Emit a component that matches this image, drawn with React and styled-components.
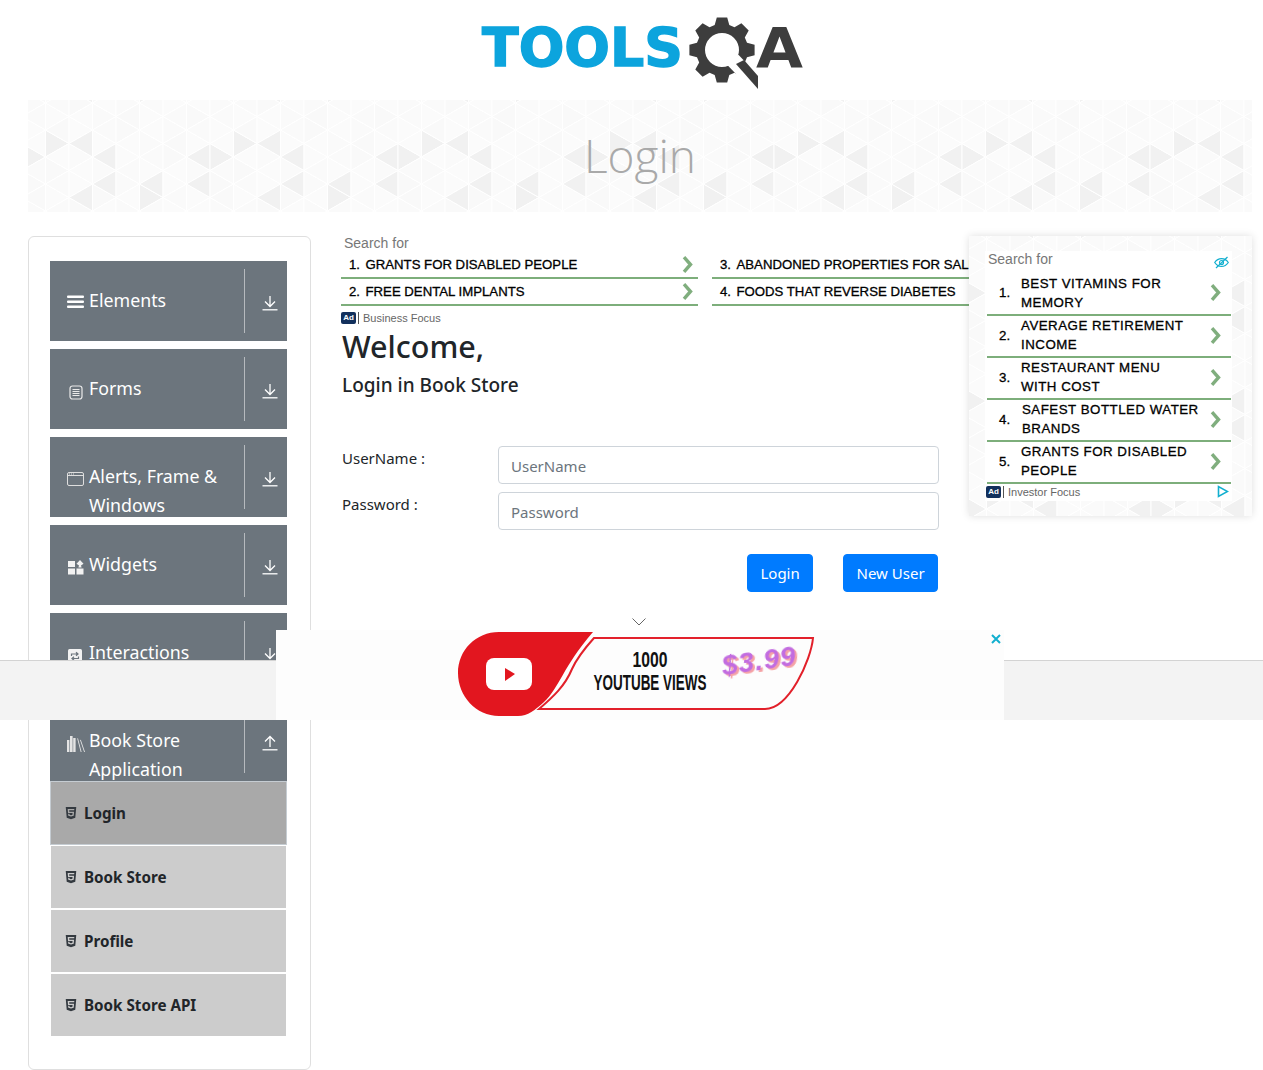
import React from 'react'
import styled, { createGlobalStyle } from 'styled-components'
import { FaHtml5 } from 'react-icons/fa'

const Global = createGlobalStyle`
  html, body { margin: 0; padding: 0; background: #fff; }
  body {
    font-family: "Noto Sans", "Open Sans", sans-serif;
    color: #212529;
    overflow-x: hidden;
  }
  * { box-sizing: border-box; }
`

const Page = styled.div`
  position: relative;
  width: 1263px;
  height: 1070px;
  overflow: hidden;
  padding: 0 11px 0 28px;
`
const Header = styled.header`
  height: 100px;
  display: flex;
  justify-content: center;
`
const Banner = styled.div`
  position: relative;
  height: 112px;
  display: flex;
  align-items: center;
  justify-content: center;
  padding-bottom: 2px;
  overflow: hidden;
`
const Backdrop = styled.svg`
  position: absolute;
  inset: 0;
  width: 100%;
  height: 100%;
`
const Title = styled.h1`
  position: relative;
  margin: 0;
  font-family: "Open Sans", sans-serif;
  font-size: 46px;
  font-weight: 300;
  color: #a9a9a9;
`
const Content = styled.div`
  position: relative;
  display: flex;
  margin-top: 24px;
`

/* sidebar */
const Sidebar = styled.nav`
  flex: 0 0 283px;
  height: 834px;
  border: 1px solid #dfdfdf;
  border-radius: 6px;
  padding: 24px 23px 0 21px;
`
const Group = styled.div`
  display: flex;
  height: 80px;
  overflow: hidden;
  background: #6c757d;
  color: #fff;
  margin-bottom: ${p => (p.$open ? 0 : '8px')};
`
const GroupTitle = styled.div`
  flex: 0 0 194px;
  display: flex;
  padding: 25px 0 0 17px;
  font-size: 17.8px;
  line-height: 29px;
`
const GroupIcon = styled.span`
  flex: 0 0 22px;
  display: flex;
  align-items: flex-start;
  padding-top: 9px;
`
const Expand = styled.div`
  flex: 1;
  margin: 8px 0;
  padding: 4px 0 0 7px;
  border-left: 1px solid #b6babe;
  display: flex;
  align-items: center;
  justify-content: center;
`
const SubItem = styled.div`
  height: 64px;
  display: flex;
  align-items: center;
  gap: 6px;
  padding-left: 13px;
  background: ${p => (p.$active ? '#a9a9a9' : '#cccccc')};
  border: 1px solid ${p => (p.$active ? '#c5ccd2' : '#ffffff')};
  font-size: 15.2px;
  font-weight: 700;
  color: #212529;
  svg { color: #343a40; margin-top: -1px; }
`

/* main column */
const Main = styled.main`
  flex: 1;
  min-width: 0;
  padding-left: 30px;
`
const AdHint = styled.div`
  font-family: "Liberation Sans", Arial, sans-serif;
  font-size: 14px;
  line-height: 15px;
  height: 16px;
  color: #777;
  padding-left: 3px;
`
const AdGrid = styled.div`
  display: grid;
  grid-template-columns: 357px 357px;
  column-gap: 14px;
`
const AdRow = styled.div`
  height: 27px;
  display: flex;
  align-items: center;
  padding: 0 4px 1px 8px;
  border-bottom: 2px solid #7dae7b;
  font-family: "Liberation Sans", Arial, sans-serif;
  font-size: 13.2px;
  color: #000;
  -webkit-text-stroke: 0.3px #000;
  white-space: nowrap;
`
const AdNum = styled.span`
  flex: 0 0 16.5px;
`
const AdText = styled.span`
  flex: 1;
`
const AdFoot = styled.div`
  display: flex;
  align-items: center;
  height: 14px;
  margin-top: 5px;
  font-family: "Liberation Sans", Arial, sans-serif;
  font-size: 11px;
  color: #666;
`
const AdBadge = styled.span`
  display: inline-block;
  width: 15px;
  height: 12px;
  line-height: 12px;
  border-radius: 2px;
  background: #12305c;
  color: #fff;
  font-size: 8px;
  font-weight: 700;
  text-align: center;
  margin-right: 2px;
`
const AdBar = styled.span`
  width: 1px;
  height: 12px;
  background: #555;
  margin-right: 4px;
`
const Welcome = styled.h2`
  margin: 2px 0 0 1px;
  font-size: 30.5px;
  line-height: 38px;
  font-weight: 500;
`
const SubHead = styled.h5`
  margin: 8px 0 0 1px;
  font-size: 19px;
  line-height: 24px;
  font-weight: 500;
`
const LoginForm = styled.form`
  width: 598px;
  margin-top: 49px;
  padding-left: 1px;
`
const FormRow = styled.div`
  display: grid;
  grid-template-columns: 156px 441px;
  margin-bottom: 8px;
`
const FieldLabel = styled.label`
  font-size: 15px;
  line-height: 24px;
`
const Field = styled.input`
  height: 38px;
  padding: 2px 12px 0;
  border: 1px solid #ced4da;
  border-radius: 4px;
  font: inherit;
  font-size: 15px;
  &::placeholder { color: #6c757d; opacity: 1; }
`
const Buttons = styled.div`
  display: flex;
  justify-content: flex-end;
  gap: 30px;
  margin-top: 24px;
  padding-right: 1px;
`
const Btn = styled.button`
  height: 38px;
  padding: 0 12.4px;
  border: 1px solid #007bff;
  border-radius: 4px;
  background: #007bff;
  color: #fff;
  font: inherit;
  font-size: 15px;
`

/* floating side ad */
const SideAd = styled.aside`
  position: absolute;
  top: 0;
  right: 0;
  width: 283px;
  height: 280px;
  padding: 15px 20px 15px 16px;
  overflow: hidden;
  background: #fff;
  box-shadow: 0 0 8px rgba(0, 0, 0, .13);
`
const SideInner = styled.div`
  position: relative;
  height: 250px;
  background: #fff;
  padding: 0 1px 0 2px;
`
const SideHead = styled.div`
  height: 22px;
  display: flex;
  align-items: flex-start;
  justify-content: space-between;
  padding-left: 1px;
  font-family: "Liberation Sans", Arial, sans-serif;
  font-size: 14px;
  line-height: 16px;
  color: #777;
  svg { margin: 5px 2px 0 0; }
`
const SideRow = styled.div`
  height: ${p => (p.$first ? 43 : 42)}px;
  display: flex;
  align-items: center;
  padding: 0 9px 2px 12px;
  border-bottom: 2px solid #7dae7b;
  font-family: "Liberation Sans", Arial, sans-serif;
  font-size: 13.3px;
  color: #000;
  -webkit-text-stroke: 0.3px #000;
`
const SideNum = styled.span`
  flex: 0 0 22px;
`
const SideText = styled.span`
  flex: 1;
  line-height: 19px;
  letter-spacing: .5px;
  white-space: pre-line;
  padding-left: ${p => p.$shift || 0}px;
`
const SideFoot = styled.div`
  display: flex;
  align-items: center;
  height: 15px;
  margin-left: -1px;
  font-family: "Liberation Sans", Arial, sans-serif;
  font-size: 11px;
  color: #666;
  & > svg { margin-left: auto; margin-right: 2px; }
`

/* sticky bottom ad */
const StickyStrip = styled.div`
  position: absolute;
  left: 0;
  right: 0;
  top: 660px;
  height: 60px;
  background: #f3f3f3;
  border-top: 1px solid #d3d3d3;
`
const StickyCreative = styled.div`
  position: absolute;
  left: 276px;
  top: 630px;
  width: 728px;
  height: 90px;
  background: #fdfdfd;
  display: flex;
  align-items: center;
  padding-left: 182px;
`
const StickyFold = styled.svg`
  position: absolute;
  left: 632px;
  top: 618px;
`
const StickyClose = styled.svg`
  position: absolute;
  right: 3px;
  top: 4px;
`
const PriceTag = styled.text`
  font-family: "Liberation Sans", Arial, sans-serif;
  font-style: italic;
  font-weight: 700;
  font-size: 28px;
  letter-spacing: 1px;
  fill: #c26ce0;
  filter: drop-shadow(2px 2px 0 #f5a3a6);
`

const darkCells = new Set(['3L57', '3L84', '7L57', '7R57', '7L84', '5L84', '0R43.5', '2L43.5', '2L97.5', '4R97.5'])
const paleFills = ['#fbfbfb', '#fafafa', '#f9f9f9', '#fbfbfb', '#fafafa']

function trianglesFor() {
  const out = []
  const W = 23.5
  const S = 27
  for (let k = -1; k <= 8; k++) {
    const x = 17.5 + k * W
    const odd = ((k % 2) + 2) % 2 === 1
    const start = odd ? 3 : -10.5
    for (let cy = start; cy <= 125; cy += S) {
      const wrapK = ((k % 8) + 8) % 8
      const wrapY = ((cy % 108) + 108) % 108
      ;['L', 'R'].forEach(dir => {
        const tip = dir === 'L' ? x - W : x + W
        const key = wrapK + dir + wrapY
        const seed = Math.floor(wrapK * 7 + wrapY * 3 + (dir === 'L' ? 5 : 11)) % 5
        const fill = darkCells.has(key) ? '#f1f1f1' : paleFills[seed]
        out.push(
          <polygon
            key={k + key + cy}
            points={`${x},${cy - S / 2} ${x},${cy + S / 2} ${tip},${cy}`}
            fill={fill}
            stroke="#ffffff"
            strokeWidth="1"
          />
        )
      })
    }
  }
  return out
}

const TrianglePattern = ({ id }) => (
  <Backdrop aria-hidden="true">
    <defs>
      <pattern id={id} width="188" height="108" patternUnits="userSpaceOnUse">
        {trianglesFor()}
      </pattern>
    </defs>
    <rect width="100%" height="100%" fill={`url(#${id})`} />
  </Backdrop>
)

function gearPath(cx, cy, outer, root, hole, teeth) {
  const step = (Math.PI * 2) / teeth
  let d = ''
  for (let i = 0; i < teeth; i++) {
    const a = i * step - Math.PI / 2
    const pts = [
      [root, a - step * 0.36],
      [outer, a - step * 0.2],
      [outer, a + step * 0.2],
      [root, a + step * 0.36],
    ]
    pts.forEach(([r, t], j) => {
      const px = (cx + r * Math.cos(t)).toFixed(1)
      const py = (cy + r * Math.sin(t)).toFixed(1)
      d += `${i === 0 && j === 0 ? 'M' : 'L'}${px} ${py} `
    })
  }
  d += `Z M${cx - hole} ${cy} a${hole} ${hole} 0 1 0 ${hole * 2} 0 a${hole} ${hole} 0 1 0 ${-hole * 2} 0 Z`
  return d
}

const Logo = () => (
  <svg width="326" height="100" viewBox="0 0 326 100" role="img" aria-label="Tools QA">
    <text
      x="5"
      y="66"
      textLength="201"
      lengthAdjust="spacingAndGlyphs"
      fontFamily="DejaVu Sans, sans-serif"
      fontWeight="700"
      fontSize="54"
      fill="#0ca4dd"
      stroke="#0ca4dd"
      strokeWidth="1.4"
    >
      TOOLS
    </text>
    <path d={gearPath(245, 50, 33, 26, 17, 8)} fill="#3d3d3d" fillRule="evenodd" />
    <path d="M256 60 L282 87" stroke="#fff" strokeWidth="15" />
    <path d="M259 64 L281 89 L281 76 L267 60 Z" fill="#3d3d3d" />
    <text
      x="279"
      y="67"
      textLength="47"
      lengthAdjust="spacingAndGlyphs"
      fontFamily="DejaVu Sans, sans-serif"
      fontWeight="700"
      fontSize="55"
      fill="#3d3d3d"
    >
      A
    </text>
  </svg>
)

const ArrowIcon = ({ up }) => (
  <svg width="16" height="16" viewBox="0 0 16 16" fill="none" stroke="#fff" strokeWidth="1.3">
    {up ? <path d="M8 12V1.5M3 6.5l5-5 5 5" /> : <path d="M8 1v10.5M3 6.5l5 5 5-5" />}
    <path d="M.5 14.8h15" />
  </svg>
)
const BarsIcon = () => (
  <svg width="17" height="14" viewBox="0 0 17 14" fill="#fff">
    <rect y="0.5" width="17" height="2.6" rx="1" />
    <rect y="5.5" width="17" height="2.6" rx="1" />
    <rect y="10.5" width="17" height="2.6" rx="1" />
  </svg>
)
const FormIcon = () => (
  <svg width="14" height="15" viewBox="0 0 14 15" fill="none" stroke="#e9e9e9" style={{ marginLeft: 2, marginTop: 2 }}>
    <rect x="1" y="1" width="12" height="13" rx="2.5" strokeWidth="1.2" />
    <path d="M3.5 4.5h7M3.5 6.5h7M3.5 8.5h7M3.5 10.5h7" strokeWidth="1" />
  </svg>
)
const WindowIcon = () => (
  <svg width="17" height="15" viewBox="0 0 17 15" fill="none" stroke="#dedede" strokeWidth="1">
    <rect x=".5" y="1.5" width="16" height="13" rx="1.5" />
    <path d="M.5 4.5h16" />
    <path d="M2 3h1M4 3h1M6 3h1" />
  </svg>
)
const WidgetIcon = () => (
  <svg width="16" height="15" viewBox="0 0 16 15" fill="#f2f2f2" style={{ marginLeft: 1, marginTop: 1 }}>
    <rect x="0" y="1" width="7" height="6" />
    <rect x="0" y="8.5" width="7" height="6" />
    <rect x="8.5" y="8.5" width="7" height="6" />
    <path d="M12 0l3.5 3.8-2.5 1.6.6 2H10.400l.6-2L8.500 3.800z" />
  </svg>
)
const SwapIcon = () => (
  <svg width="15" height="15" viewBox="0 0 15 15" style={{ marginLeft: 1, marginTop: 1 }}>
    <rect x="0" y="1" width="14" height="14" rx="1.5" fill="#f2f2f2" />
    <path d="M3.5 8V6h6M8 4.3L10 6 8 7.7M10.500 8.500v2h-6M6 8.800l-2 1.700 2 1.700" fill="none" stroke="#6c757d" strokeWidth="1.2" />
  </svg>
)
const BooksIcon = () => (
  <svg width="18" height="17" viewBox="0 0 18 17" fill="#e4e4e4">
    <rect x="0" y="5" width="2.4" height="12" />
    <rect x="3" y="1" width="2.6" height="16" />
    <rect x="6.2" y="3" width="2.4" height="14" />
    <path d="M10.200 3.500l.8-.3L14.600 17h-.9zM13 5l.8-.3L18 17h-.9z" />
  </svg>
)
const Chevron = () => (
  <svg width="12" height="17" viewBox="0 0 12 17" fill="none" stroke="#80ae7e" strokeWidth="3.4">
    <path d="M2 1.200l6.500 7.300L2 15.800" />
  </svg>
)
const EyeOff = () => (
  <svg width="15" height="13" viewBox="0 0 15 13" fill="none" stroke="#12afcf" strokeWidth="1.2">
    <path d="M.7 6.500C2.500 3.800 5 2.600 7.500 2.600s5 1.200 6.800 3.900c-1.800 2.700-4.300 3.900-6.800 3.900S2.500 9.200.7 6.500z" />
    <circle cx="7.5" cy="6.5" r="2" />
    <path d="M2 12L13.500 1" />
  </svg>
)
const PlayMark = () => (
  <svg width="12" height="13" viewBox="0 0 12 13" fill="none" stroke="#12afcf" strokeWidth="1.6">
    <path d="M1.500 1.500v10l9-5z" />
  </svg>
)

const YoutubeCreative = () => (
  <svg width="360" height="90" viewBox="0 0 360 90">
    <path d="M135 2H41C18 2 0 20 0 43s18 43 41 43h19c10 0 17-6 26-14 16-15 18-34 49-70z" fill="#e2161f" />
    <path d="M136 8H355c-2 22-24 71-48 71H81c14-12 26-23 33-40 5-11 13-21 22-31z" fill="none" stroke="#e2202a" strokeWidth="2" />
    <rect x="28" y="28" width="46" height="32" rx="8" fill="#fff" />
    <path d="M47 38l10 6-10 7z" fill="#e2161f" />
    <text x="192" y="37" textAnchor="middle" textLength="35" lengthAdjust="spacingAndGlyphs" fontFamily="Liberation Sans, Arial, sans-serif" fontWeight="700" fontSize="22" fill="#111">1000</text>
    <text x="192" y="60" textAnchor="middle" textLength="113" lengthAdjust="spacingAndGlyphs" fontFamily="Liberation Sans, Arial, sans-serif" fontWeight="700" fontSize="22" fill="#111">YOUTUBE VIEWS</text>
    <PriceTag x="301" y="40" textAnchor="middle" transform="rotate(-8 301 30)">$3.99</PriceTag>
  </svg>
)

const groups = [
  { name: 'Elements', icon: <BarsIcon /> },
  { name: 'Forms', icon: <FormIcon /> },
  { name: 'Alerts, Frame & Windows', icon: <WindowIcon /> },
  { name: 'Widgets', icon: <WidgetIcon /> },
  { name: 'Interactions', icon: <SwapIcon /> },
  { name: 'Book Store Application', icon: <BooksIcon />, open: true },
]
const subItems = ['Login', 'Book Store', 'Profile', 'Book Store API']
const topAds = [
  ['1.', 'GRANTS FOR DISABLED PEOPLE'],
  ['3.', 'ABANDONED PROPERTIES FOR SALE'],
  ['2.', 'FREE DENTAL IMPLANTS'],
  ['4.', 'FOODS THAT REVERSE DIABETES'],
]
const sideAds = [
  ['BEST VITAMINS FOR\nMEMORY'],
  ['AVERAGE RETIREMENT\nINCOME'],
  ['RESTAURANT MENU\nWITH COST'],
  ['SAFEST BOTTLED WATER\nBRANDS', 1],
  ['GRANTS FOR DISABLED\nPEOPLE'],
]

export default function App() {
  return (
    <Page>
      <Global />
      <Header>
        <Logo />
      </Header>
      <Banner>
        <TrianglePattern id="banner-tiles" />
        <Title>Login</Title>
      </Banner>
      <Content>
        <Sidebar>
          {groups.map(g => (
            <Group key={g.name} $open={g.open}>
              <GroupTitle>
                <GroupIcon>{g.icon}</GroupIcon>
                <span>{g.name}</span>
              </GroupTitle>
              <Expand>
                <ArrowIcon up={g.open} />
              </Expand>
            </Group>
          ))}
          {subItems.map((name, i) => (
            <SubItem key={name} $active={i === 0}>
              <FaHtml5 size={14} />
              {name}
            </SubItem>
          ))}
        </Sidebar>
        <Main>
          <AdHint>Search for</AdHint>
          <AdGrid>
            {topAds.map(([num, text], i) => (
              <AdRow key={text}>
                <AdNum>{num}</AdNum>
                <AdText>{text}</AdText>
                {i % 2 === 0 && <Chevron />}
              </AdRow>
            ))}
          </AdGrid>
          <AdFoot>
            <AdBadge>Ad</AdBadge>
            <AdBar />
            Business Focus
          </AdFoot>
          <Welcome>Welcome,</Welcome>
          <SubHead>Login in Book Store</SubHead>
          <LoginForm>
            <FormRow>
              <FieldLabel>UserName :</FieldLabel>
              <Field placeholder="UserName" />
            </FormRow>
            <FormRow>
              <FieldLabel>Password :</FieldLabel>
              <Field placeholder="Password" />
            </FormRow>
            <Buttons>
              <Btn type="button">Login</Btn>
              <Btn type="button">New User</Btn>
            </Buttons>
          </LoginForm>
        </Main>
        <SideAd>
          <TrianglePattern id="side-tiles" />
          <SideInner>
            <SideHead>
              Search for
              <EyeOff />
            </SideHead>
            {sideAds.map(([text, shift], i) => (
              <SideRow key={text} $first={i === 0}>
                <SideNum>{i + 1}.</SideNum>
                <SideText $shift={shift}>{text}</SideText>
                <Chevron />
              </SideRow>
            ))}
            <SideFoot>
              <AdBadge>Ad</AdBadge>
              <AdBar />
              Investor Focus
              <PlayMark />
            </SideFoot>
          </SideInner>
        </SideAd>
      </Content>
      <StickyStrip />
      <StickyFold width="14" height="8" viewBox="0 0 14 8" fill="none" stroke="#666" strokeWidth="1">
        <path d="M.5.5L7 7 13.500.5" />
      </StickyFold>
      <StickyCreative>
        <YoutubeCreative />
        <StickyClose width="10" height="10" viewBox="0 0 10 10" fill="none" stroke="#12afcf" strokeWidth="2">
          <path d="M1 1l8 8M9 1l-8 8" />
        </StickyClose>
      </StickyCreative>
    </Page>
  )
}
